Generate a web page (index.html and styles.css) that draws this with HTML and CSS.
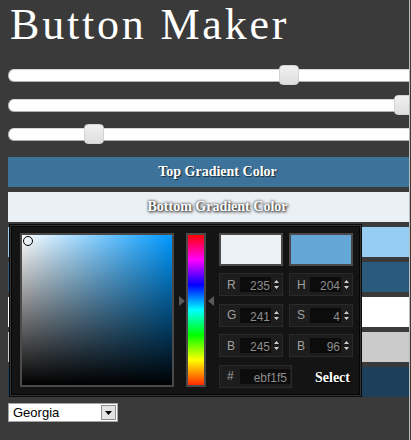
FILE: index.html
```html
<!DOCTYPE html>
<html>
<head>
<meta charset="utf-8">
<title>Button Maker</title>
<link rel="stylesheet" href="styles.css">
</head>
<body>
<div class="frame">
  <div class="page">
    <h1 class="title">Button Maker</h1>
    <div class="sliders">
      <div class="slider"><span class="handle" style="left:270px"></span></div>
      <div class="slider"><span class="handle" style="left:385px"></span></div>
      <div class="slider"><span class="handle" style="left:75px"></span></div>
    </div>
    <div class="bars">
      <div class="bar bar-top">Top Gradient Color</div>
      <div class="bar bar-bottom">Bottom Gradient Color</div>
      <div class="bar c-light"></div>
      <div class="bar c-dark"></div>
      <div class="bar c-white"></div>
      <div class="bar c-gray"></div>
      <div class="bar c-navy"></div>

      <div class="picker">
        <div class="sv">
          <span class="sv-cursor"></span>
        </div>
        <div class="hue">
          <div class="hue-strip"></div>
          <svg class="arrow arrow-left" width="6" height="10" viewBox="0 0 6 10"><path d="M0 0 L6 5 L0 10 Z" fill="#5a5a5a"/></svg>
          <svg class="arrow arrow-right" width="6" height="10" viewBox="0 0 6 10"><path d="M6 0 L0 5 L6 10 Z" fill="#5a5a5a"/></svg>
        </div>
        <div class="controls">
          <div class="swatch swatch-new"></div>
          <div class="swatch swatch-cur"></div>

          <div class="field"><span class="lbl">R</span><span class="val">235</span><svg class="spin" width="5" height="9" viewBox="0 0 5 9"><path d="M2.5 0 L5 3 L0 3 Z M0 6 L5 6 L2.5 9 Z" fill="#d0d0d0"/></svg></div>
          <div class="field"><span class="lbl">H</span><span class="val">204</span><svg class="spin" width="5" height="9" viewBox="0 0 5 9"><path d="M2.5 0 L5 3 L0 3 Z M0 6 L5 6 L2.5 9 Z" fill="#d0d0d0"/></svg></div>

          <div class="field"><span class="lbl">G</span><span class="val">241</span><svg class="spin" width="5" height="9" viewBox="0 0 5 9"><path d="M2.5 0 L5 3 L0 3 Z M0 6 L5 6 L2.5 9 Z" fill="#d0d0d0"/></svg></div>
          <div class="field"><span class="lbl">S</span><span class="val">4</span><svg class="spin" width="5" height="9" viewBox="0 0 5 9"><path d="M2.5 0 L5 3 L0 3 Z M0 6 L5 6 L2.5 9 Z" fill="#d0d0d0"/></svg></div>

          <div class="field"><span class="lbl">B</span><span class="val">245</span><svg class="spin" width="5" height="9" viewBox="0 0 5 9"><path d="M2.5 0 L5 3 L0 3 Z M0 6 L5 6 L2.5 9 Z" fill="#d0d0d0"/></svg></div>
          <div class="field"><span class="lbl">B</span><span class="val">96</span><svg class="spin" width="5" height="9" viewBox="0 0 5 9"><path d="M2.5 0 L5 3 L0 3 Z M0 6 L5 6 L2.5 9 Z" fill="#d0d0d0"/></svg></div>

          <div class="field field-hex"><span class="lbl">#</span><span class="val val-hex">ebf1f5</span></div>
          <div class="select-btn">Select</div>
        </div>
      </div>
    </div>
    <div class="dropdown">
      <span class="dropdown-text">Georgia</span>
      <span class="dropdown-btn"><svg width="7" height="4" viewBox="0 0 7 4"><path d="M0 0 L7 0 L3.5 4 Z" fill="#000"/></svg></span>
    </div>
  </div>
</div>
</body>
</html>
```

FILE: styles.css
```css
html, body {
  margin: 0;
  padding: 0;
  background: #3a3a3a;
}

.frame {
  margin-left: 8px;
  width: 401px;
  height: 440px;
  overflow: hidden;
  border-right: 1px solid #bcbcbc;
}

.page {
  width: 419px;
}

.title {
  margin: 0;
  padding-left: 2px;
  font-family: "Liberation Serif", "Times New Roman", serif;
  font-weight: normal;
  font-size: 44px;
  line-height: 50px;
  letter-spacing: 2.8px;
  color: #ffffff;
}

.sliders {
  margin-top: 19px;
  display: flex;
  flex-direction: column;
  gap: 16.5px;
}

.slider {
  position: relative;
  height: 13px;
  box-sizing: border-box;
  background: #ffffff;
  border: 1px solid #b0b0b0;
  border-top-color: #d8d8d8;
  border-radius: 6px;
}

.handle {
  position: absolute;
  top: -5px;
  width: 20px;
  height: 20px;
  box-sizing: border-box;
  border: 1px solid #d3d3d3;
  border-radius: 4px;
  background: linear-gradient(#f0f0f0, #dedede);
}

.bars {
  position: relative;
  margin-top: 16px;
  display: flex;
  flex-direction: column;
  gap: 5px;
}

.bar {
  height: 30px;
  line-height: 30px;
  text-align: center;
  font-family: "Liberation Serif", "Times New Roman", serif;
  font-weight: bold;
  font-size: 14px;
  color: #ffffff;
}

.bar-top {
  background: #3d739b;
  text-shadow: 1px 1px 1px #1a2a38;
}

.bar-bottom {
  background: #ebf0f4;
  text-shadow: 0 0 3px #222, 1px 1px 3px #333;
}

.c-light { background: #96cdf3; }
.c-dark { background: #2a5b7d; }
.c-white { background: #ffffff; }
.c-gray { background: #cbcbcb; }
.c-navy { background: #1e3f59; }

.picker {
  position: absolute;
  left: 2px;
  top: 68px;
  width: 351px;
  height: 171px;
  box-sizing: border-box;
  padding: 7px 0 0 9px;
  background: #141414;
  border: 1px solid #333333;
  box-shadow: inset 0 0 0 1px #050505, 0 0 0 1px #0a0a0a;
  display: flex;
  align-items: flex-start;
}

.sv {
  position: relative;
  width: 154px;
  height: 154px;
  box-sizing: border-box;
  border: 2px solid #4a4a4a;
  background:
    linear-gradient(to top, #000000, rgba(0, 0, 0, 0)),
    linear-gradient(to right, #ffffff, #0099ff);
}

.sv-cursor {
  position: absolute;
  left: 1px;
  top: 1px;
  width: 10px;
  height: 10px;
  box-sizing: border-box;
  border: 1px solid #000000;
  border-radius: 50%;
}

.hue {
  position: relative;
  margin-left: 12px;
  width: 20px;
  height: 154px;
}

.hue-strip {
  height: 100%;
  box-sizing: border-box;
  border: 2px solid #4a4a4a;
  background: linear-gradient(to bottom,
    #ff0000 0%, #ff00ff 16.67%, #0000ff 33.33%, #00ffff 50%,
    #00ff00 66.67%, #ffff00 83.33%, #ff2a00 100%);
}

.arrow {
  position: absolute;
  top: 63px;
  display: block;
}

.arrow-left { left: -7px; }
.arrow-right { left: 22px; }

.controls {
  margin-left: 13px;
  display: grid;
  grid-template-columns: 64px 64px;
  column-gap: 6px;
  row-gap: 7.5px;
}

.swatch {
  height: 33px;
  box-sizing: border-box;
  border: 2px solid #4a4a4a;
  margin-bottom: -0.5px;
}

.swatch-new { background: #ebf1f5; }
.swatch-cur { background: #64a6d6; }

.field {
  height: 23px;
  box-sizing: border-box;
  background: #1d1d1d;
  border: 1px solid #2a2a2a;
  display: flex;
  align-items: center;
  font-family: "Liberation Sans", Arial, sans-serif;
  font-size: 12px;
}

.lbl {
  width: 20px;
  box-sizing: border-box;
  padding-left: 7px;
  color: #a0a0a0;
}

.val {
  width: 31px;
  height: 15px;
  box-sizing: border-box;
  padding-right: 1px;
  background: #0c0c0c;
  color: #8c8c8c;
  text-align: right;
  line-height: 18px;
  overflow: hidden;
}

.spin {
  display: block;
  margin-left: 3px;
}

.field-hex {
  width: 73px;
}

.val-hex {
  width: 50px;
  padding-right: 3px;
}

.select-btn {
  align-self: center;
  padding-top: 3px;
  padding-left: 26px;
  font-family: "Liberation Serif", "Times New Roman", serif;
  font-weight: bold;
  font-size: 14px;
  color: #ffffff;
  text-shadow: 1px 1px 1px #000;
}

.dropdown {
  margin-top: 6px;
  width: 110px;
  height: 19px;
  box-sizing: border-box;
  background: #ffffff;
  border: 1px solid #a5a5a5;
  display: flex;
  align-items: center;
  justify-content: space-between;
}

.dropdown-text {
  padding-left: 4px;
  font-family: "Liberation Sans", Arial, sans-serif;
  font-size: 13px;
  color: #000000;
}

.dropdown-btn {
  width: 15px;
  height: 15px;
  margin-right: 1px;
  box-sizing: border-box;
  background: #e3e3e3;
  border: 1px solid #8e8e8e;
  display: flex;
  align-items: center;
  justify-content: center;
}

.dropdown-btn svg {
  display: block;
}
```
